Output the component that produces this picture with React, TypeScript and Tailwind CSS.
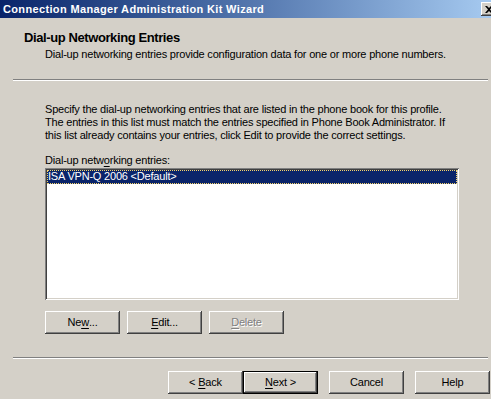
type BtnProps = {
  children: React.ReactNode;
  isDefault?: boolean;
  disabled?: boolean;
};

function Btn({ children, isDefault, disabled }: BtnProps) {
  const bevel =
    "shadow-[inset_-1px_-1px_#404040,inset_1px_1px_#ffffff,inset_-2px_-2px_#808080,inset_2px_2px_#d4d0c8]";
  return (
    <div
      className={
        "flex h-[23px] w-[75px] shrink-0 items-center justify-center bg-[#d4d0c8] " +
        (isDefault ? "border border-black " : "")
      }
    >
      <div
        className={
          "flex h-full w-full items-center justify-center whitespace-pre " +
          bevel +
          (disabled ? " text-[#808080] [text-shadow:1px_1px_0_#ffffff]" : " text-black")
        }
      >
        {children}
      </div>
    </div>
  );
}

function Key({ c }: { c: string }) {
  return <span className="underline underline-offset-[2px]">{c}</span>;
}

export default function App() {
  return (
    <div className="h-[399px] w-[491px] overflow-hidden bg-[#d4d0c8] font-['Liberation_Sans',Arial,sans-serif] text-[11px] leading-[13px] tracking-[-0.2px] text-black">
      {/* title bar */}
      <div className="flex h-[18px] items-center bg-gradient-to-r from-[#0a246a] to-[#a6caf0] pl-[3px]">
        <span className="text-[11px] font-bold tracking-[0.35px] text-white">
          Connection Manager Administration Kit Wizard
        </span>
        <div className="ml-auto mr-[-6px] flex h-[14px] w-[16px] shrink-0 items-center justify-center bg-[#d4d0c8] shadow-[inset_-1px_-1px_#404040,inset_1px_1px_#ffffff,inset_-2px_-2px_#808080]">
          <svg width="8" height="7" viewBox="0 0 8 7">
            <path d="M0 0h2l2 2 2-2h2L5 3.5 8 7H6L4 5 2 7H0l3-3.5z" fill="#000" />
          </svg>
        </div>
      </div>

      {/* header */}
      <div className="mt-[12px] pl-[24px] text-[13px] leading-[16px] font-bold tracking-[-0.4px]">
        Dial-up Networking Entries
      </div>
      <div className="mt-[2px] pl-[45px]">
        Dial-up networking entries provide configuration data for one or more phone numbers.
      </div>
      <div className="mt-[18px] ml-[13px] mr-[3px] h-[2px] border-t border-b border-t-[#808080] border-b-white" />

      {/* body */}
      <div className="pl-[45px]">
        <p className="mt-[22px] whitespace-nowrap">
          Specify the dial-up networking entries that are listed in the phone book for this profile.
          <br />
          The entries in this list must match the entries specified in Phone Book Administrator. If
          <br />
          this list already contains your entries, click Edit to provide the correct settings.
        </p>
        <div className="mt-[12px]">
          Dial-up netw<Key c="o" />rking entries:
        </div>
        <div className="mt-[1px] h-[132px] w-[414px] bg-white p-[2px] shadow-[inset_1px_1px_#808080,inset_-1px_-1px_#ffffff,inset_2px_2px_#404040,inset_-2px_-2px_#d4d0c8]">
          <div className="h-[14px] bg-[#0a246a] pl-[1px] text-white outline-1 outline-dotted outline-offset-[-1px] outline-[#f5d36a]">
            ISA VPN-Q 2006 &lt;Default&gt;
          </div>
        </div>
        <div className="mt-[11px] flex gap-[7px]">
          <Btn>
            Ne<Key c="w" />...
          </Btn>
          <Btn>
            <Key c="E" />dit...
          </Btn>
          <Btn disabled>
            <Key c="D" />elete
          </Btn>
        </div>
      </div>

      <div className="mt-[23px] ml-[13px] mr-[3px] h-[2px] border-t border-b border-t-[#808080] border-b-white" />

      {/* wizard buttons */}
      <div className="mt-[12px] flex pl-[168px]">
        <Btn>
          {"< "}
          <Key c="B" />
          ack
        </Btn>
        <Btn isDefault>
          <Key c="N" />
          {"ext >"}
        </Btn>
        <div className="w-[11px] shrink-0" />
        <Btn>Cancel</Btn>
        <div className="w-[11px] shrink-0" />
        <Btn>Help</Btn>
      </div>
    </div>
  );
}
